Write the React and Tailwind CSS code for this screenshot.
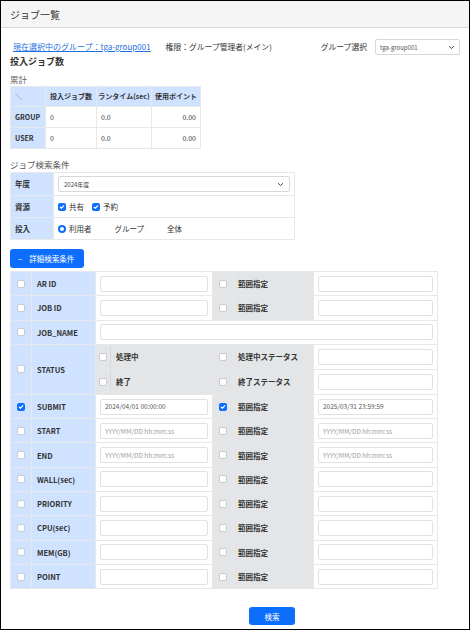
const FONT = { fontFamily: '"Noto Sans CJK JP", "Noto Sans", sans-serif' };

function Check({ checked }) {
  if (checked) {
    return (
      <span className="inline-flex w-[8px] h-[8px] rounded-[2px] bg-[#0d6efd] items-center justify-center shrink-0">
        <svg viewBox="0 0 10 10" className="w-[6px] h-[6px]" fill="none" stroke="white" strokeWidth="2">
          <path d="M2 5.2l2 2 4-4.4" strokeLinecap="round" strokeLinejoin="round" />
        </svg>
      </span>
    );
  }
  return <span className="inline-block w-[8px] h-[8px] rounded-[2px] border border-[#c8cbcf] bg-white shrink-0" />;
}

function Input({ value, placeholder }) {
  return (
    <div className="h-[16px] rounded-[2px] border border-[#dee2e6] bg-white flex items-center px-[4px] text-[6.5px] leading-none">
      {value ? (
        <span className="text-[#555]">{value}</span>
      ) : placeholder ? (
        <span className="text-[#9a9ea3]">{placeholder}</span>
      ) : null}
    </div>
  );
}

function Chevron() {
  return (
    <svg viewBox="0 0 10 10" className="w-[7px] h-[7px]" fill="none" stroke="#444" strokeWidth="1.4">
      <path d="M2 3.5l3 3 3-3" strokeLinecap="round" strokeLinejoin="round" />
    </svg>
  );
}

const rows = [
  { label: "AR ID", kind: "range" },
  { label: "JOB ID", kind: "range" },
  { label: "JOB_NAME", kind: "wide" },
  { label: "STATUS", kind: "status" },
  { label: "SUBMIT", kind: "range", checked: true, from: "2024/04/01 00:00:00", to: "2025/03/31 23:59:59" },
  { label: "START", kind: "range", ph: "YYYY/MM/DD hh:mm:ss" },
  { label: "END", kind: "range", ph: "YYYY/MM/DD hh:mm:ss" },
  { label: "WALL(sec)", kind: "range" },
  { label: "PRIORITY", kind: "range" },
  { label: "CPU(sec)", kind: "range" },
  { label: "MEM(GB)", kind: "range" },
  { label: "POINT", kind: "range" },
];

const BD = "border border-[#e6e8ea]";
const LBL = "font-bold text-[7.5px] text-[#333]";

function DetailTable() {
  const body = [];
  rows.forEach((r) => {
    if (r.kind === "status") {
      body.push(
        <tr key="st1" className="h-[25px]">
          <td rowSpan={2} className={`${BD} bg-[#cfe2ff] text-center`}><div className="flex justify-center"><Check /></div></td>
          <td rowSpan={2} className={`${BD} bg-[#cfe2ff] pl-[5px] ${LBL}`}>STATUS</td>
          <td className={`${BD} bg-[#e4e5e7] p-0`}>
            <div className="flex items-stretch h-[24px]">
              <div className="w-[15px] flex items-center justify-center border-r border-[#d6d8da]"><Check /></div>
              <div className={`flex items-center pl-[5px] ${LBL}`}>処理中</div>
            </div>
          </td>
          <td className={`${BD} bg-[#e4e5e7]`}><div className="flex justify-center"><Check /></div></td>
          <td className={`${BD} bg-[#e4e5e7] pl-[4px] ${LBL} whitespace-nowrap`}>処理中ステータス</td>
          <td className={`${BD} bg-white px-[4px]`}><Input /></td>
        </tr>
      );
      body.push(
        <tr key="st2" className="h-[25px]">
          <td className={`${BD} bg-[#e4e5e7] p-0`}>
            <div className="flex items-stretch h-[24px]">
              <div className="w-[15px] flex items-center justify-center border-r border-[#d6d8da]"><Check /></div>
              <div className={`flex items-center pl-[5px] ${LBL}`}>終了</div>
            </div>
          </td>
          <td className={`${BD} bg-[#e4e5e7]`}><div className="flex justify-center"><Check /></div></td>
          <td className={`${BD} bg-[#e4e5e7] pl-[4px] ${LBL} whitespace-nowrap`}>終了ステータス</td>
          <td className={`${BD} bg-white px-[4px]`}><Input /></td>
        </tr>
      );
      return;
    }
    body.push(
      <tr key={r.label} className="h-[24.3px]">
        <td className={`${BD} bg-[#cfe2ff]`}><div className="flex justify-center"><Check checked={r.checked} /></div></td>
        <td className={`${BD} bg-[#cfe2ff] pl-[5px] ${LBL} whitespace-nowrap`}>{r.label}</td>
        {r.kind === "wide" ? (
          <td colSpan={4} className={`${BD} bg-white px-[4px]`}><Input /></td>
        ) : (
          <>
            <td className={`${BD} bg-white px-[4px]`}><Input value={r.from} placeholder={r.ph} /></td>
            <td className={`${BD} bg-[#e4e5e7]`}><div className="flex justify-center"><Check checked={r.checked} /></div></td>
            <td className={`${BD} bg-[#e4e5e7] pl-[4px] ${LBL} whitespace-nowrap`}>範囲指定</td>
            <td className={`${BD} bg-white px-[4px]`}><Input value={r.to} placeholder={r.ph} /></td>
          </>
        )}
      </tr>
    );
  });
  return (
    <table className="border-collapse table-fixed w-[427px] mt-[3px]">
      <colgroup>
        <col className="w-[21px]" />
        <col className="w-[64px]" />
        <col className="w-[117px]" />
        <col className="w-[21px]" />
        <col className="w-[80px]" />
        <col className="w-[124px]" />
      </colgroup>
      <tbody>{body}</tbody>
    </table>
  );
}

export default function App() {
  return (
    <div className="w-[471px] h-[631px] bg-white overflow-hidden" style={FONT}>
      <div className="w-[470px] h-[630px] border border-black flex flex-col">
        <div className="h-[27px] shrink-0 bg-[#f5f5f5] border-b border-[#d9d9d9] flex items-center pl-[9px] text-[10px] text-[#333]">
          ジョブ一覧
        </div>
        <div className="pl-[9px] pr-[9px]">
          <div className="flex items-center mt-[11px] h-[16px]">
            <a className="ml-[3px] text-[8px] text-[#1e6fe0] underline whitespace-nowrap">現在選択中のグループ：tga-group001</a>
            <span className="ml-[15px] text-[7.8px] text-[#333] whitespace-nowrap">権限：グループ管理者(メイン)</span>
            <span className="ml-auto text-[7.8px] text-[#333] whitespace-nowrap">グループ選択</span>
            <div className="ml-[8px] w-[85px] h-[16px] border border-[#d6d8db] rounded-[2px] flex items-center justify-between px-[4px]">
              <span className="text-[6px] text-[#555]">tga-group001</span>
              <Chevron />
            </div>
          </div>
          <div className="mt-[1px] text-[9px] font-bold text-[#333] leading-[12px]">投入ジョブ数</div>
          <div className="mt-[5px] text-[8.5px] text-[#666] leading-[12px]">累計</div>
          <table className="border-collapse table-fixed w-[190px] mt-[1px] text-[7px] text-[#333]">
            <colgroup>
              <col className="w-[35px]" />
              <col className="w-[51px]" />
              <col className="w-[55px]" />
              <col className="w-[49px]" />
            </colgroup>
            <tbody>
              <tr className="h-[20px]">
                <td className={`${BD} bg-[#cfe2ff] pl-[4px] text-[#777]`}>＼</td>
                <td className={`${BD} bg-[#cfe2ff] font-bold text-center whitespace-nowrap`}>投入ジョブ数</td>
                <td className={`${BD} bg-[#cfe2ff] font-bold text-center whitespace-nowrap`}>ランタイム(sec)</td>
                <td className={`${BD} bg-[#cfe2ff] font-bold text-center whitespace-nowrap`}>使用ポイント</td>
              </tr>
              {["GROUP", "USER"].map((g) => (
                <tr key={g} className="h-[21px]">
                  <td className={`${BD} bg-[#cfe2ff] pl-[4px] font-bold`}>{g}</td>
                  <td className={`${BD} pl-[4px] text-[#333]`}>0</td>
                  <td className={`${BD} pl-[4px] text-[#333]`}>0.0</td>
                  <td className={`${BD} pr-[4px] text-right text-[#333]`}>0.00</td>
                </tr>
              ))}
            </tbody>
          </table>
          <div className="mt-[9px] text-[8.5px] text-[#555] leading-[12px]">ジョブ検索条件</div>
          <table className="border-collapse table-fixed w-[284px] mt-[2px] text-[7.5px] text-[#333]">
            <colgroup>
              <col className="w-[43px]" />
              <col className="w-[241px]" />
            </colgroup>
            <tbody>
              <tr className="h-[23px]">
                <td className={`${BD} bg-[#cfe2ff] pl-[4px] font-bold`}>年度</td>
                <td className={`${BD} px-[4px]`}>
                  <div className="h-[16px] border border-[#d6d8db] rounded-[2px] flex items-center justify-between px-[5px]">
                    <span className="text-[6px] text-[#444]">2024年度</span>
                    <Chevron />
                  </div>
                </td>
              </tr>
              <tr className="h-[22px]">
                <td className={`${BD} bg-[#cfe2ff] pl-[4px] font-bold`}>資源</td>
                <td className={`${BD} px-[4px]`}>
                  <div className="flex items-center">
                    <Check checked />
                    <span className="ml-[3px]">共有</span>
                    <span className="ml-[8px] flex"><Check checked /></span>
                    <span className="ml-[3px]">予約</span>
                  </div>
                </td>
              </tr>
              <tr className="h-[22px]">
                <td className={`${BD} bg-[#cfe2ff] pl-[4px] font-bold`}>投入</td>
                <td className={`${BD} px-[4px]`}>
                  <div className="flex items-center">
                    <span className="inline-block w-[8px] h-[8px] rounded-full border-[2.5px] border-[#0d6efd] bg-white" />
                    <span className="ml-[3px]">利用者</span>
                    <span className="ml-[23px]">グループ</span>
                    <span className="ml-[23px]">全体</span>
                  </div>
                </td>
              </tr>
            </tbody>
          </table>
          <button className="mt-[9px] w-[74px] h-[19px] rounded-[3px] bg-[#0d6efd] text-white text-[7.5px] flex items-center pl-[8px]">
            <span className="mr-[7px]">−</span>詳細検索条件
          </button>
          <DetailTable />
          <div className="flex mt-[18px]">
            <button className="ml-[239px] w-[46px] h-[18px] rounded-[3px] bg-[#0d6efd] text-white text-[7.5px]">検索</button>
          </div>
        </div>
      </div>
    </div>
  );
}
